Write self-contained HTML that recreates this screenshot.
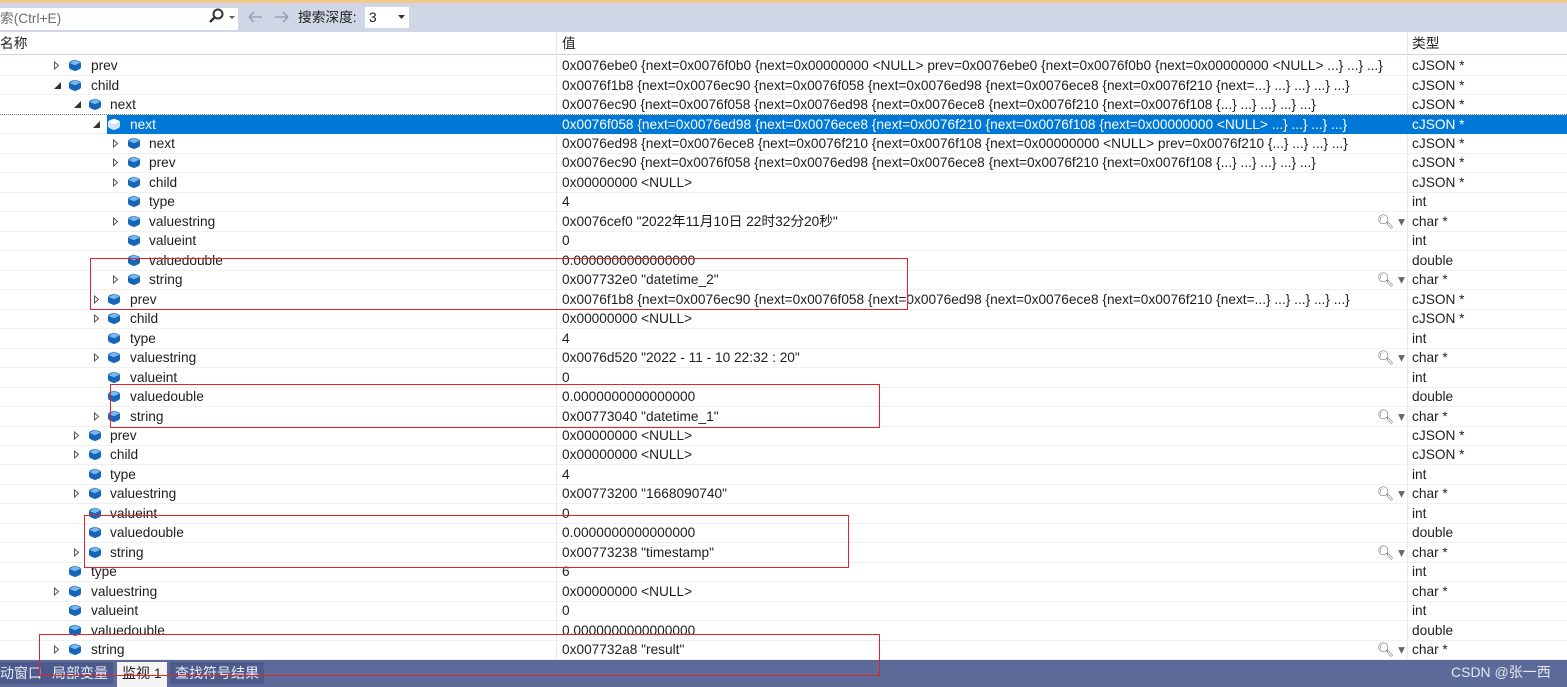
<!DOCTYPE html>
<html><head><meta charset="utf-8">
<style>
*{margin:0;padding:0;box-sizing:border-box}
body{width:1567px;height:687px;overflow:hidden;background:#fff;font-family:"Segoe UI","Liberation Sans","Noto Sans CJK SC",sans-serif;font-size:13.7px;color:#1e1e1e;position:relative}
#top{position:absolute;left:0;top:0;width:1567px;height:3px;background:#f3c98b}
#tb{position:absolute;left:0;top:3px;width:1567px;height:29px;background:#cfd6e5}
#search{position:absolute;left:0;top:5px;width:238px;height:22px;background:#fff;color:#6d6d6d;padding-left:0;line-height:22px}
#hdr{position:absolute;left:0;top:32px;width:1567px;height:23px;background:#fff;border-bottom:1px solid #ccd5e6;line-height:24px}
.r{position:absolute;left:0;width:1567px;height:19.5px;border-bottom:1px solid #f0f0f0;line-height:20px;white-space:nowrap}
.r span{position:absolute}
.v{left:562px}
.t{left:1412px}
.cl{position:absolute;left:556px;top:32px;width:1px;height:628px;background:#e8e8e8}
.cl2{position:absolute;left:1407px;top:32px;width:1px;height:628px;background:#e8e8e8}
.sel{background:#0078d7;color:#fff}
.ic{position:absolute;top:3px;width:14px;height:13px}
.ar{position:absolute;top:5px;width:8px;height:9px}
.box{position:absolute;border:1.5px solid #e0242c}
#bb{position:absolute;left:0;top:660px;width:1567px;height:27px;background:#5c6a99;color:#fff;font-size:14px}
.tab{position:absolute;top:2px;height:22px;line-height:22px;padding:0 5px;background:#4d5b8c;color:#e8ebf5}
.mag{position:absolute;left:1377px;top:0px;color:#666}
</style></head><body>
<div id="top"></div>
<div id="tb">
<div id="search">索(Ctrl+E)</div>
<svg style="position:absolute;left:207px;top:5px" width="30" height="18"><circle cx="11" cy="6" r="4.5" fill="none" stroke="#333" stroke-width="2"/><line x1="8" y1="9" x2="3" y2="14" stroke="#333" stroke-width="2.5"/><path d="M22 8h6l-3 3z" fill="#555"/></svg>
<svg style="position:absolute;left:246px;top:6px" width="46" height="16"><path d="M3 8h13M3 8l5-5M3 8l5 5" stroke="#9aa3b8" stroke-width="1.6" fill="none"/><path d="M42 8H29M42 8l-5-5M42 8l-5 5" stroke="#9aa3b8" stroke-width="1.6" fill="none"/></svg>
<div style="position:absolute;left:298px;top:5px;line-height:20px">搜索深度:</div>
<div style="position:absolute;left:364px;top:3px;width:46px;height:23px;background:#fff;border:1px solid #cfd6e5;line-height:21px;padding-left:4px">3<svg style="position:absolute;left:33px;top:8px" width="8" height="5"><path d="M0 0h7l-3.5 4z" fill="#333"/></svg></div>
</div>
<div id="hdr"><span style="position:absolute;left:0">名称</span><span style="position:absolute;left:562px">值</span><span style="position:absolute;left:1412px">类型</span></div>
<div class="cl"></div><div class="cl2"></div>

<svg width="0" height="0" style="position:absolute"><defs>
<g id="cube"><path d="M1 4.5Q1 3 3 2L6 1Q7 .6 8 1L12 2.5Q13 3 13 4.5V8Q13 9.5 11.5 10.2L8 11.8Q7 12.2 6 11.8L2.5 10.2Q1 9.5 1 8z" fill="#1665b8"/><path d="M1.5 4L6.5 1.3Q7 1 7.5 1.3L12.5 3.5 7 6.2z" fill="#79b8ef"/></g>
<g id="cw"><path d="M1 4.5Q1 3 3 2L6 1Q7 .6 8 1L12 2.5Q13 3 13 4.5V8Q13 9.5 11.5 10.2L8 11.8Q7 12.2 6 11.8L2.5 10.2Q1 9.5 1 8z" fill="#cfe5fa"/><path d="M1.5 4L6.5 1.3Q7 1 7.5 1.3L12.5 3.5 7 6.2z" fill="#fff"/></g>
<path id="col" d="M1.5 1l4 3.5-4 3.5z" fill="none" stroke="#555" stroke-width="1"/>
<path id="exp" d="M7 1v7H0z" fill="#333"/>
</defs></svg>

<div class="r" style="top:56px"><svg class="ar" style="left:53px"><use href="#col"/></svg><svg class="ic" style="left:68px"><use href="#cube"/></svg><span style="left:91px">prev</span><span class="v">0x0076ebe0 {next=0x0076f0b0 {next=0x00000000 &lt;NULL&gt; prev=0x0076ebe0 {next=0x0076f0b0 {next=0x00000000 &lt;NULL&gt; ...} ...} ...}</span><span class="t">cJSON *</span></div>
<div class="r" style="top:75.5px"><svg class="ar" style="left:54px"><use href="#exp"/></svg><svg class="ic" style="left:68px"><use href="#cube"/></svg><span style="left:91px">child</span><span class="v">0x0076f1b8 {next=0x0076ec90 {next=0x0076f058 {next=0x0076ed98 {next=0x0076ece8 {next=0x0076f210 {next=...} ...} ...} ...} ...}</span><span class="t">cJSON *</span></div>
<div class="r" style="top:95px"><svg class="ar" style="left:74px"><use href="#exp"/></svg><svg class="ic" style="left:88px"><use href="#cube"/></svg><span style="left:110px">next</span><span class="v">0x0076ec90 {next=0x0076f058 {next=0x0076ed98 {next=0x0076ece8 {next=0x0076f210 {next=0x0076f108 {...} ...} ...} ...} ...}</span><span class="t">cJSON *</span></div>
<div class="r" style="top:114px;border-top:1px dotted #888"><div class="sel" style="position:absolute;left:107px;top:0;width:1460px;height:19px"></div><svg class="ar" style="left:93px"><use href="#exp"/></svg><svg class="ic" style="left:107px"><use href="#cw"/></svg><span style="left:130px;color:#fff">next</span><span class="v" style="color:#fff">0x0076f058 {next=0x0076ed98 {next=0x0076ece8 {next=0x0076f210 {next=0x0076f108 {next=0x00000000 &lt;NULL&gt; ...} ...} ...} ...}</span><span class="t" style="color:#fff">cJSON *</span></div>
<div class="r" style="top:134px"><svg class="ar" style="left:112px"><use href="#col"/></svg><svg class="ic" style="left:127px"><use href="#cube"/></svg><span style="left:149px">next</span><span class="v">0x0076ed98 {next=0x0076ece8 {next=0x0076f210 {next=0x0076f108 {next=0x00000000 &lt;NULL&gt; prev=0x0076f210 {...} ...} ...} ...}</span><span class="t">cJSON *</span></div>
<div class="r" style="top:153px"><svg class="ar" style="left:112px"><use href="#col"/></svg><svg class="ic" style="left:127px"><use href="#cube"/></svg><span style="left:149px">prev</span><span class="v">0x0076ec90 {next=0x0076f058 {next=0x0076ed98 {next=0x0076ece8 {next=0x0076f210 {next=0x0076f108 {...} ...} ...} ...} ...}</span><span class="t">cJSON *</span></div>
<div class="r" style="top:173px"><svg class="ar" style="left:112px"><use href="#col"/></svg><svg class="ic" style="left:127px"><use href="#cube"/></svg><span style="left:149px">child</span><span class="v">0x00000000 &lt;NULL&gt;</span><span class="t">cJSON *</span></div>
<div class="r" style="top:192px"><svg class="ic" style="left:127px"><use href="#cube"/></svg><span style="left:149px">type</span><span class="v">4</span><span class="t">int</span></div>
<div class="r" style="top:212px"><svg class="ar" style="left:112px"><use href="#col"/></svg><svg class="ic" style="left:127px"><use href="#cube"/></svg><span style="left:149px">valuestring</span><span class="v">0x0076cef0 "2022年11月10日 22时32分20秒"</span><span class="mag">🔍︎ ▾</span><span class="t">char *</span></div>
<div class="r" style="top:231px"><svg class="ic" style="left:127px"><use href="#cube"/></svg><span style="left:149px">valueint</span><span class="v">0</span><span class="t">int</span></div>
<div class="r" style="top:251px"><svg class="ic" style="left:127px"><use href="#cube"/></svg><span style="left:149px">valuedouble</span><span class="v">0.0000000000000000</span><span class="t">double</span></div>
<div class="r" style="top:270px"><svg class="ar" style="left:112px"><use href="#col"/></svg><svg class="ic" style="left:127px"><use href="#cube"/></svg><span style="left:149px">string</span><span class="v">0x007732e0 "datetime_2"</span><span class="mag">🔍︎ ▾</span><span class="t">char *</span></div>
<div class="r" style="top:290px"><svg class="ar" style="left:93px"><use href="#col"/></svg><svg class="ic" style="left:107px"><use href="#cube"/></svg><span style="left:130px">prev</span><span class="v">0x0076f1b8 {next=0x0076ec90 {next=0x0076f058 {next=0x0076ed98 {next=0x0076ece8 {next=0x0076f210 {next=...} ...} ...} ...} ...}</span><span class="t">cJSON *</span></div>
<div class="r" style="top:309px"><svg class="ar" style="left:93px"><use href="#col"/></svg><svg class="ic" style="left:107px"><use href="#cube"/></svg><span style="left:130px">child</span><span class="v">0x00000000 &lt;NULL&gt;</span><span class="t">cJSON *</span></div>
<div class="r" style="top:329px"><svg class="ic" style="left:107px"><use href="#cube"/></svg><span style="left:130px">type</span><span class="v">4</span><span class="t">int</span></div>
<div class="r" style="top:348px"><svg class="ar" style="left:93px"><use href="#col"/></svg><svg class="ic" style="left:107px"><use href="#cube"/></svg><span style="left:130px">valuestring</span><span class="v">0x0076d520 "2022 - 11 - 10 22:32 : 20"</span><span class="mag">🔍︎ ▾</span><span class="t">char *</span></div>
<div class="r" style="top:368px"><svg class="ic" style="left:107px"><use href="#cube"/></svg><span style="left:130px">valueint</span><span class="v">0</span><span class="t">int</span></div>
<div class="r" style="top:387px"><svg class="ic" style="left:107px"><use href="#cube"/></svg><span style="left:130px">valuedouble</span><span class="v">0.0000000000000000</span><span class="t">double</span></div>
<div class="r" style="top:407px"><svg class="ar" style="left:93px"><use href="#col"/></svg><svg class="ic" style="left:107px"><use href="#cube"/></svg><span style="left:130px">string</span><span class="v">0x00773040 "datetime_1"</span><span class="mag">🔍︎ ▾</span><span class="t">char *</span></div>
<div class="r" style="top:426px"><svg class="ar" style="left:73px"><use href="#col"/></svg><svg class="ic" style="left:88px"><use href="#cube"/></svg><span style="left:110px">prev</span><span class="v">0x00000000 &lt;NULL&gt;</span><span class="t">cJSON *</span></div>
<div class="r" style="top:445px"><svg class="ar" style="left:73px"><use href="#col"/></svg><svg class="ic" style="left:88px"><use href="#cube"/></svg><span style="left:110px">child</span><span class="v">0x00000000 &lt;NULL&gt;</span><span class="t">cJSON *</span></div>
<div class="r" style="top:465px"><svg class="ic" style="left:88px"><use href="#cube"/></svg><span style="left:110px">type</span><span class="v">4</span><span class="t">int</span></div>
<div class="r" style="top:484px"><svg class="ar" style="left:73px"><use href="#col"/></svg><svg class="ic" style="left:88px"><use href="#cube"/></svg><span style="left:110px">valuestring</span><span class="v">0x00773200 "1668090740"</span><span class="mag">🔍︎ ▾</span><span class="t">char *</span></div>
<div class="r" style="top:504px"><svg class="ic" style="left:88px"><use href="#cube"/></svg><span style="left:110px">valueint</span><span class="v">0</span><span class="t">int</span></div>
<div class="r" style="top:523px"><svg class="ic" style="left:88px"><use href="#cube"/></svg><span style="left:110px">valuedouble</span><span class="v">0.0000000000000000</span><span class="t">double</span></div>
<div class="r" style="top:543px"><svg class="ar" style="left:73px"><use href="#col"/></svg><svg class="ic" style="left:88px"><use href="#cube"/></svg><span style="left:110px">string</span><span class="v">0x00773238 "timestamp"</span><span class="mag">🔍︎ ▾</span><span class="t">char *</span></div>
<div class="r" style="top:562px"><svg class="ic" style="left:68px"><use href="#cube"/></svg><span style="left:91px">type</span><span class="v">6</span><span class="t">int</span></div>
<div class="r" style="top:582px"><svg class="ar" style="left:53px"><use href="#col"/></svg><svg class="ic" style="left:68px"><use href="#cube"/></svg><span style="left:91px">valuestring</span><span class="v">0x00000000 &lt;NULL&gt;</span><span class="t">char *</span></div>
<div class="r" style="top:601px"><svg class="ic" style="left:68px"><use href="#cube"/></svg><span style="left:91px">valueint</span><span class="v">0</span><span class="t">int</span></div>
<div class="r" style="top:621px"><svg class="ic" style="left:68px"><use href="#cube"/></svg><span style="left:91px">valuedouble</span><span class="v">0.0000000000000000</span><span class="t">double</span></div>
<div class="r" style="top:640px"><svg class="ar" style="left:53px"><use href="#col"/></svg><svg class="ic" style="left:68px"><use href="#cube"/></svg><span style="left:91px">string</span><span class="v">0x007732a8 "result"</span><span class="mag">🔍︎ ▾</span><span class="t">char *</span></div>

<div id="bb">
<div class="tab" style="left:0;padding-left:0">动窗口</div>
<div class="tab" style="left:47px">局部变量</div>
<div class="tab" style="left:117px;background:#f5f5f5;color:#1e1e1e;top:2px;height:25px">监视 1</div>
<div class="tab" style="left:170px">查找符号结果</div>
<div style="position:absolute;left:1451px;top:2px;line-height:20px;color:#e4e7f0">CSDN @张一西</div>
</div>

<div class="box" style="left:90px;top:258px;width:818px;height:52px"></div>
<div class="box" style="left:110px;top:384px;width:770px;height:44px"></div>
<div class="box" style="left:84px;top:515px;width:765px;height:53px"></div>
<div class="box" style="left:39px;top:634px;width:841px;height:42px"></div>
</body></html>
